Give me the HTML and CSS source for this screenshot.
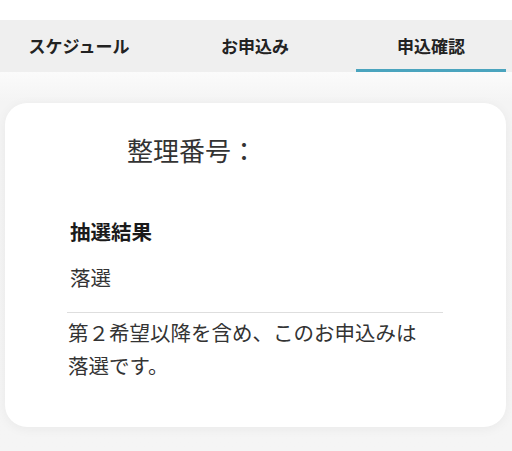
FILE: index.html
```html
<!DOCTYPE html>
<html lang="ja">
<head>
<meta charset="utf-8">
<link rel="stylesheet" href="styles.css">
</head>
<body>
<div class="topgap"></div>
<nav class="tabs">
  <div class="tab">スケジュール</div>
  <div class="tab">お申込み</div>
  <div class="tab active">申込確認</div>
</nav>
<main class="page">
  <section class="card">
    <h1 class="number">整理番号：</h1>
    <div class="content">
      <h2 class="label">抽選結果</h2>
      <p class="value">落選</p>
      <hr class="divider">
      <p class="message">第２希望以降を含め、このお申込みは落選です。</p>
    </div>
  </section>
</main>
</body>
</html>
```

FILE: styles.css
```css
* { box-sizing: border-box; }
html, body {
  margin: 0;
  padding: 0;
  height: 100%;
}
body {
  background: #f5f5f5;
  font-family: "Noto Sans CJK JP", "Noto Sans", sans-serif;
  color: #333;
  overflow: hidden;
}
.topgap {
  height: 20px;
  background: #ffffff;
}
.tabs {
  display: flex;
  gap: 26px;
  padding-left: 4px;
  height: 52px;
  background: #efefef;
}
.tab {
  width: 150px;
  display: flex;
  align-items: center;
  justify-content: center;
  padding-bottom: 2px;
  font-size: 17px;
  font-weight: 700;
  color: #222;
}
.tab.active {
  box-shadow: inset 0 -3px 0 #4aa4be;
}
.page {
  padding: 31px 6px 0 5px;
  background: linear-gradient(#fbfbfb 0, #f4f4f4 30px, #f5f5f5 100%);
  height: calc(100% - 72px);
}
.card {
  background: #ffffff;
  border-radius: 22px;
  height: 324px;
  padding-top: 29px;
  box-shadow: 0 2px 12px rgba(0, 0, 0, 0.05);
}
.number {
  margin: 0 0 0 122px;
  font-size: 26px;
  line-height: 36px;
  font-weight: 400;
  color: #333;
}
.content {
  margin: 49px 0 0 62px;
  width: 376px;
}
.label {
  margin: 0 0 0 3px;
  font-size: 20.5px;
  line-height: 28px;
  font-weight: 700;
  color: #1a1a1a;
}
.value {
  margin: 18px 0 0 3px;
  font-size: 20.5px;
  line-height: 28px;
  color: #333;
}
.divider {
  margin: 21px 0 0 0;
  border: 0;
  border-top: 1px solid #dedede;
  height: 0;
}
.message {
  margin: 3px 0 0 1px;
  max-width: 362px;
  font-size: 20.5px;
  line-height: 33px;
  color: #333;
}
```
